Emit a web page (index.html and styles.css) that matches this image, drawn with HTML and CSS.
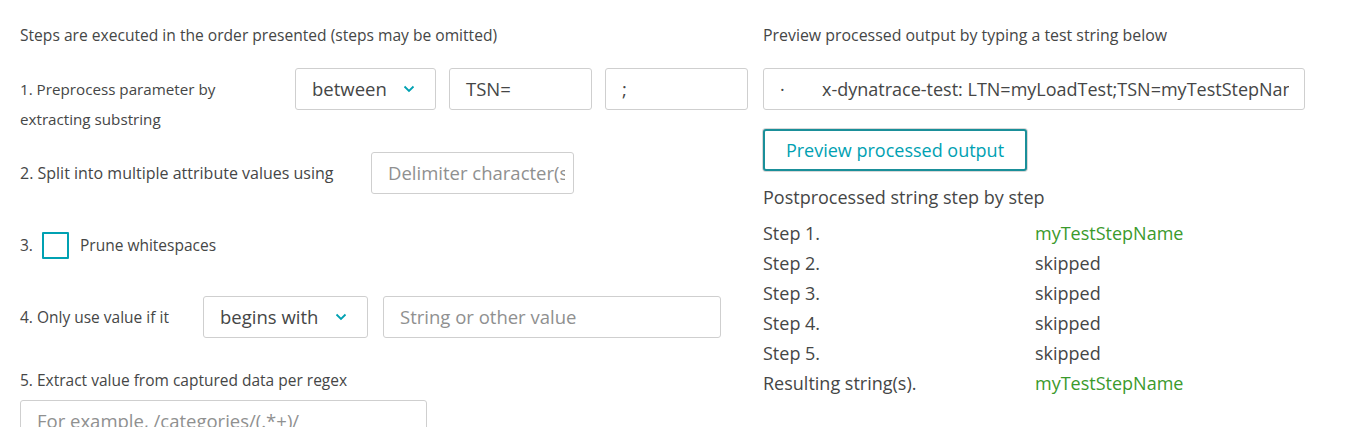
FILE: index.html
```html
<!DOCTYPE html>
<html>
<head>
<meta charset="utf-8">
<link rel="stylesheet" href="styles.css">
</head>
<body>
<div class="page">
  <div class="col-left">
    <div class="title">Steps are executed in the order presented (steps may be omitted)</div>

    <div class="row row1">
      <div class="label label1">1. Preprocess parameter by<br>extracting substring</div>
      <div class="select sel1"><span>between</span><svg class="chev" width="12" height="8" viewBox="0 0 12 8"><path d="M1.5 1.5 L6 6 L10.5 1.5" fill="none" stroke="#00a1b2" stroke-width="1.8"/></svg></div>
      <div class="input in-tsn">TSN=</div>
      <div class="input in-semi">;</div>
    </div>

    <div class="row row2">
      <div class="label label2">2. Split into multiple attribute values using</div>
      <div class="input in-delim placeholder"><span class="clip">Delimiter character(s)</span></div>
    </div>

    <div class="row row3">
      <span class="num">3.</span>
      <span class="checkbox"></span>
      <span class="cb-label">Prune whitespaces</span>
    </div>

    <div class="row row4">
      <div class="label label4">4. Only use value if it</div>
      <div class="select sel4"><span>begins with</span><svg class="chev" width="12" height="8" viewBox="0 0 12 8"><path d="M1.5 1.5 L6 6 L10.5 1.5" fill="none" stroke="#00a1b2" stroke-width="1.8"/></svg></div>
      <div class="input in-value placeholder">String or other value</div>
    </div>

    <div class="label label5">5. Extract value from captured data per regex</div>
    <div class="input in-regex placeholder">For example, /categories/(.*+)/</div>
  </div>

  <div class="col-right">
    <div class="title title-r">Preview processed output by typing a test string below</div>
    <div class="input in-test"><span class="dot">·</span><span class="clip test-text">x-dynatrace-test: LTN=myLoadTest;TSN=myTestStepName</span></div>
    <button class="btn">Preview processed output</button>
    <div class="subtitle">Postprocessed string step by step</div>
    <div class="steps">
      <div>Step 1.</div><div class="ok">myTestStepName</div>
      <div>Step 2.</div><div>skipped</div>
      <div>Step 3.</div><div>skipped</div>
      <div>Step 4.</div><div>skipped</div>
      <div>Step 5.</div><div>skipped</div>
      <div>Resulting string(s).</div><div class="ok">myTestStepName</div>
    </div>
  </div>
</div>
</body>
</html>
```

FILE: styles.css
```css
html, body {
  margin: 0;
  padding: 0;
  background: #fff;
  overflow: hidden;
}
body {
  font-family: "Open Sans", "Liberation Sans", sans-serif;
  color: #454646;
  font-size: 15.5px;
}
.page {
  display: flex;
  padding: 25px 0 0 20px;
  height: 427px;
  box-sizing: border-box;
}
.col-left {
  width: 743px;
  flex: none;
}
.col-right {
  width: 542px;
  flex: none;
  display: flex;
  flex-direction: column;
  align-items: flex-start;
}
.title {
  font-size: 15.6px;
  line-height: 20px;
  height: 20px;
  white-space: nowrap;
}
.title-r {
  font-size: 15.9px;
}
.row {
  display: flex;
  align-items: center;
}
.label {
  font-size: 15.5px;
  line-height: 20px;
  white-space: nowrap;
}
.row1 {
  margin-top: 23px;
  align-items: flex-start;
}
.label1 {
  width: 275px;
  line-height: 30px;
  padding-top: 6px;
  font-size: 15.2px;
}
.input, .select {
  box-sizing: border-box;
  height: 42px;
  border: 1px solid #cfcfcf;
  border-radius: 3px;
  font-size: 18.5px;
  line-height: 40px;
  padding: 0 16px;
  white-space: nowrap;
  overflow: hidden;
  color: #454646;
  background: #fff;
}
.clip {
  display: block;
  overflow: hidden;
  white-space: nowrap;
}
.placeholder {
  color: #8f9090;
}
.select {
  display: flex;
  align-items: center;
  justify-content: space-between;
  padding: 0 20px 0 16px;
}
.chev {
  display: block;
  flex: none;
}
.sel1 { width: 141px; }
.in-tsn { width: 143px; margin-left: 13px; }
.in-semi { width: 143px; margin-left: 13px; }

.row2 { margin-top: 18px; height: 42px; }
.label2 { width: 351px; font-size: 16px; }
.in-delim { width: 203px; padding-right: 8px; }

.row3 { margin-top: 30px; height: 42px; }
.num { width: 22px; }
.checkbox {
  box-sizing: border-box;
  width: 27px;
  height: 27px;
  border: 2px solid #00a1b2;
  border-radius: 1px;
}
.cb-label { margin-left: 11px; }

.row4 { margin-top: 30px; height: 42px; }
.label4 { width: 183px; }
.sel4 { width: 165px; }
.in-value { width: 338px; margin-left: 15px; }

.label5 { margin-top: 32px; }
.in-regex { width: 407px; margin-top: 10px; }

.in-test {
  width: 542px;
  margin-top: 23px;
  padding: 0 15px 0 16px;
  font-size: 18px;
  display: flex;
}
.dot { flex: none; width: 42px; }
.test-text { flex: 1; min-width: 0; }

.btn {
  margin-top: 19px;
  box-sizing: border-box;
  width: 264px;
  height: 42px;
  border: 2px solid #1a8f99;
  border-radius: 3px;
  background: #fff;
  color: #00a1b2;
  font-family: inherit;
  font-size: 18px;
  padding: 0;
  box-shadow: 0 0 0 1px #d8d8d8;
}
.subtitle {
  margin-top: 11px;
  font-size: 18px;
  line-height: 30px;
}
.steps {
  margin-top: 6px;
  display: grid;
  grid-template-columns: 272px auto;
  font-size: 18px;
  line-height: 30px;
}
.ok { color: #3a9a2c; }
```
